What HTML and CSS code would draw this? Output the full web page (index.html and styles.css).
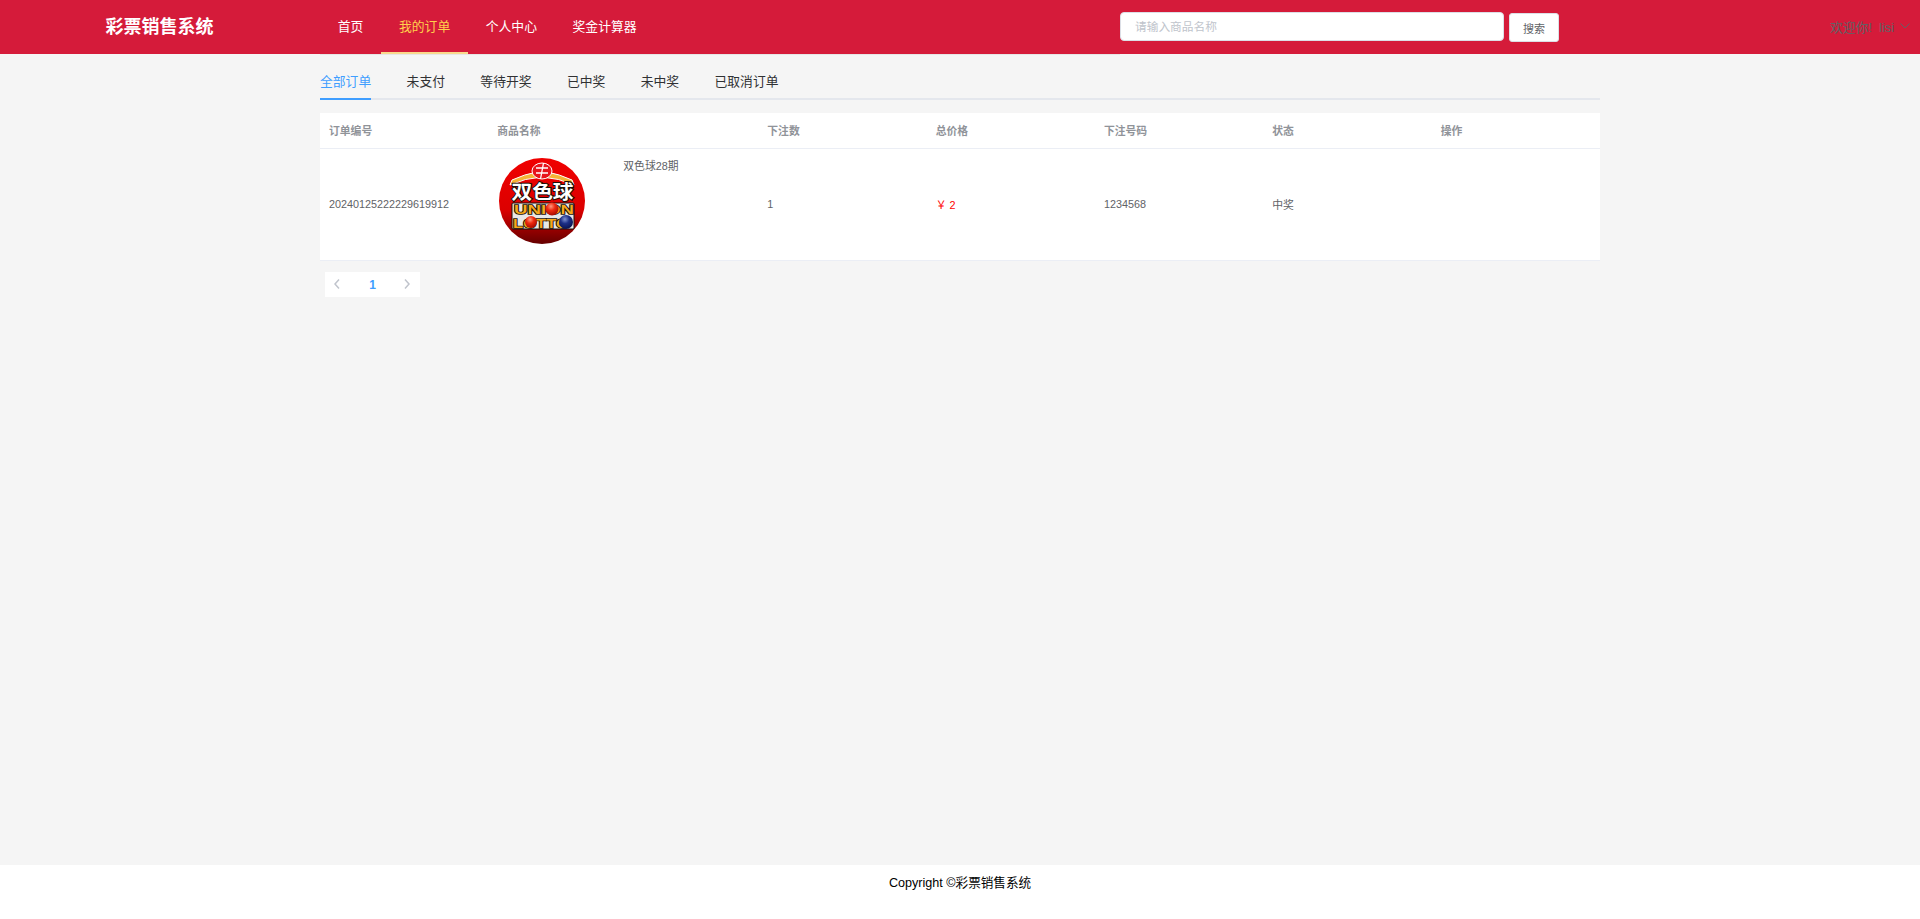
FILE: index.html
```html
<!DOCTYPE html>
<html lang="zh-CN">
<head>
    <meta charset="UTF-8">
    <meta name="viewport" content="width=device-width, initial-scale=1.0">
    <title>彩票销售系统</title>
    <link rel="stylesheet" href="styles.css">
</head>
<body>
    <header class="topbar">
        <div class="brand">彩票销售系统</div>
        <nav class="menu">
            <a class="menu-item">首页</a>
            <a class="menu-item active">我的订单</a>
            <a class="menu-item">个人中心</a>
            <a class="menu-item">奖金计算器</a>
        </nav>
        <form class="search">
            <input class="search-input" type="text" placeholder="请输入商品名称">
            <button class="search-btn" type="button">搜索</button>
        </form>
        <div class="user">
            <span>欢迎你!<span class="user-name">lisi</span></span>
            <svg class="user-arrow" viewBox="0 0 10 6" width="10" height="6"><path d="M.5.5L5 5 9.5.5" fill="none" stroke="#606266" stroke-width="1"/></svg>
        </div>
    </header>

    <main class="content">
        <div class="tabs">
            <a class="tab active">全部订单</a>
            <a class="tab">未支付</a>
            <a class="tab">等待开奖</a>
            <a class="tab">已中奖</a>
            <a class="tab">未中奖</a>
            <a class="tab">已取消订单</a>
        </div>

        <table class="orders">
            <colgroup>
                <col class="col-std">
                <col class="col-goods">
                <col class="col-std">
                <col class="col-std">
                <col class="col-std">
                <col class="col-std">
                <col class="col-std">
            </colgroup>
            <thead>
                <tr>
                    <th>订单编号</th>
                    <th>商品名称</th>
                    <th>下注数</th>
                    <th>总价格</th>
                    <th>下注号码</th>
                    <th>状态</th>
                    <th>操作</th>
                </tr>
            </thead>
            <tbody>
                <tr>
                    <td>20240125222229619912</td>
                    <td>
                        <div class="goods">
                            <svg class="goods-pic" viewBox="0 0 86 86" width="86" height="86">
                                <defs>
                                    <linearGradient id="disc" x1="0" y1="0" x2="0" y2="1">
                                        <stop offset="0" stop-color="#f00000"/>
                                        <stop offset="0.6" stop-color="#dc0000"/>
                                        <stop offset="1" stop-color="#650000"/>
                                    </linearGradient>
                                    <radialGradient id="ball-red" cx="0.42" cy="0.3" r="0.7">
                                        <stop offset="0" stop-color="#ff9a80"/>
                                        <stop offset="0.45" stop-color="#ee2a10"/>
                                        <stop offset="1" stop-color="#a80a00"/>
                                    </radialGradient>
                                    <radialGradient id="ball-blue" cx="0.42" cy="0.3" r="0.7">
                                        <stop offset="0" stop-color="#7f92d0"/>
                                        <stop offset="0.45" stop-color="#1c2f86"/>
                                        <stop offset="1" stop-color="#0b1450"/>
                                    </radialGradient>
                                </defs>
                                <circle cx="43" cy="43" r="43" fill="url(#disc)"/>
                                <path d="M11 27L13 22Q26 16 38 14L48 14Q60 16 73 22L75 27Q60 20 43 19Q26 20 11 27Z" fill="#f5b335" stroke="#fff" stroke-width="1"/>
                                <ellipse cx="43" cy="13" rx="10" ry="8" fill="#e8141c" stroke="#fff" stroke-width="1"/>
                                <path d="M37 10h12M37 15h12M44.5 5l-3 16" stroke="#fff" stroke-width="1.3" fill="none"/>
                                <rect class="logo-plate" x="13" y="45" width="62" height="26" rx="1"/>
                                <text class="logo-cn" x="43.5" y="41" text-anchor="middle" textLength="62" lengthAdjust="spacingAndGlyphs">双色球</text>
                                <text class="logo-en" x="45" y="55.5" text-anchor="middle" textLength="60" lengthAdjust="spacingAndGlyphs">UNION</text>
                                <text class="logo-en" x="42" y="70" text-anchor="middle" textLength="56" lengthAdjust="spacingAndGlyphs">LOTTO</text>
                                <circle cx="53" cy="51" r="6.5" fill="url(#ball-red)"/>
                                <circle cx="32" cy="64" r="6" fill="url(#ball-red)"/>
                                <circle cx="67" cy="64" r="7" fill="url(#ball-blue)"/>
                            </svg>
                            <span class="goods-name">双色球28期</span>
                        </div>
                    </td>
                    <td>1</td>
                    <td class="price">￥ 2</td>
                    <td>1234568</td>
                    <td>中奖</td>
                    <td></td>
                </tr>
            </tbody>
        </table>

        <div class="pager">
            <svg viewBox="0 0 6 10" width="6" height="10"><path d="M5 .5L1 5l4 4.5" fill="none" stroke="#c0c4cc" stroke-width="1.5"/></svg>
            <span class="pager-num">1</span>
            <svg viewBox="0 0 6 10" width="6" height="10"><path d="M1 .5L5 5 1 9.5" fill="none" stroke="#c0c4cc" stroke-width="1.5"/></svg>
        </div>
    </main>

    <footer class="footer">Copyright ©彩票销售系统</footer>
</body>
</html>
```

FILE: styles.css
```css
* {
    box-sizing: border-box;
}
body {
    margin: 0;
    min-height: 919px;
    display: flex;
    flex-direction: column;
    background: #f5f5f5;
    font-family: "Liberation Sans", "Noto Sans CJK SC", Arial, sans-serif;
    font-size: 12.8px;
    color: #606266;
}
a {
    cursor: pointer;
}

/* top bar */
.topbar {
    height: 54px;
    flex: none;
    display: flex;
    background: #d51b3a;
    position: relative;
}
.brand {
    width: 320px;
    padding-left: 105.5px;
    font-size: 18px;
    font-weight: 700;
    line-height: 54px;
    color: #fff;
}
.menu {
    width: 800px;
    height: 55px;
    display: flex;
    border-bottom: 1px solid #e6e6e6;
}
.menu-item {
    height: 54px;
    padding: 0 17.8px;
    line-height: 53px;
    color: #fff;
}
.menu-item.active {
    color: #ffd04b;
    border-bottom: 2px solid #f9d98c;
}
.search {
    display: flex;
    gap: 5px;
    align-items: flex-start;
    padding-top: 12px;
}
.search-input {
    width: 384px;
    height: 29px;
    padding: 0 14px;
    border: 1px solid #dcdfe6;
    border-radius: 4px;
    background: #fff;
    font: inherit;
    font-size: 11.7px;
    outline: none;
}
.search-input::placeholder {
    color: #c0c4cc;
}
.search-btn {
    width: 50px;
    height: 29px;
    margin-top: 1px;
    padding: 0;
    border: 1px solid #dcdfe6;
    border-radius: 3px;
    background: #fff;
    font: inherit;
    font-size: 11px;
    color: #606266;
}
.user {
    margin-left: auto;
    padding: 0 10px 2px 0;
    display: flex;
    align-items: center;
    gap: 6px;
    color: #606266;
}
.user-name {
    margin-left: 7px;
}

/* orders */
.content {
    flex: 1;
    width: 1280px;
    margin: 0 auto;
}
.tabs {
    height: 46px;
    display: flex;
    gap: 35.4px;
    border-bottom: 2px solid #e4e7ed;
}
.tab {
    height: 46px;
    line-height: 56px;
    color: #303133;
}
.tab.active {
    color: #409eff;
    border-bottom: 2px solid #409eff;
}
.orders {
    width: 1280px;
    margin-top: 13px;
    table-layout: fixed;
    border-collapse: collapse;
    background: #fff;
    font-size: 10.8px;
}
.col-std {
    width: 168.33px;
}
.col-goods {
    width: 270px;
}
.orders th {
    height: 35px;
    padding: 0 9px;
    text-align: left;
    font-weight: 700;
    color: #909399;
    border-bottom: 1px solid #ebeef5;
}
.orders td {
    height: 112px;
    padding: 0 9px;
    border-bottom: 1px solid #ebeef5;
}
.goods {
    display: flex;
    align-items: flex-start;
    padding: 0 0 6px 2px;
}
.goods-pic {
    flex: none;
}
.goods-name {
    margin-left: 38px;
    line-height: 16px;
}
.price {
    color: #f00;
}
.pager {
    width: 95px;
    height: 25px;
    margin: 11px 0 0 5px;
    padding: 0 10px 0 9px;
    display: flex;
    align-items: center;
    justify-content: space-between;
    background: #fff;
}
.pager-num {
    padding: 1px 0 0 1px;
    font-size: 12px;
    font-weight: 700;
    color: #409eff;
}

.footer {
    height: 54px;
    flex: none;
    padding-top: 10px;
    background: #fff;
    text-align: center;
    font-size: 12.6px;
    line-height: 16px;
    color: #000;
}

/* logo picture */
.logo-plate {
    fill: #e8e8e8;
    stroke: #1a1008;
    stroke-width: 1;
}
.logo-cn {
    font-size: 19px;
    font-weight: 700;
    fill: #fff;
    stroke: #1a1008;
    stroke-width: 2;
    paint-order: stroke;
    font-family: "Noto Sans CJK SC", sans-serif;
}
.logo-en {
    font-size: 13px;
    font-weight: 700;
    fill: #f5a81c;
    stroke: #1a1008;
    stroke-width: 1.6;
    paint-order: stroke;
    font-family: "Liberation Sans", sans-serif;
}
```
